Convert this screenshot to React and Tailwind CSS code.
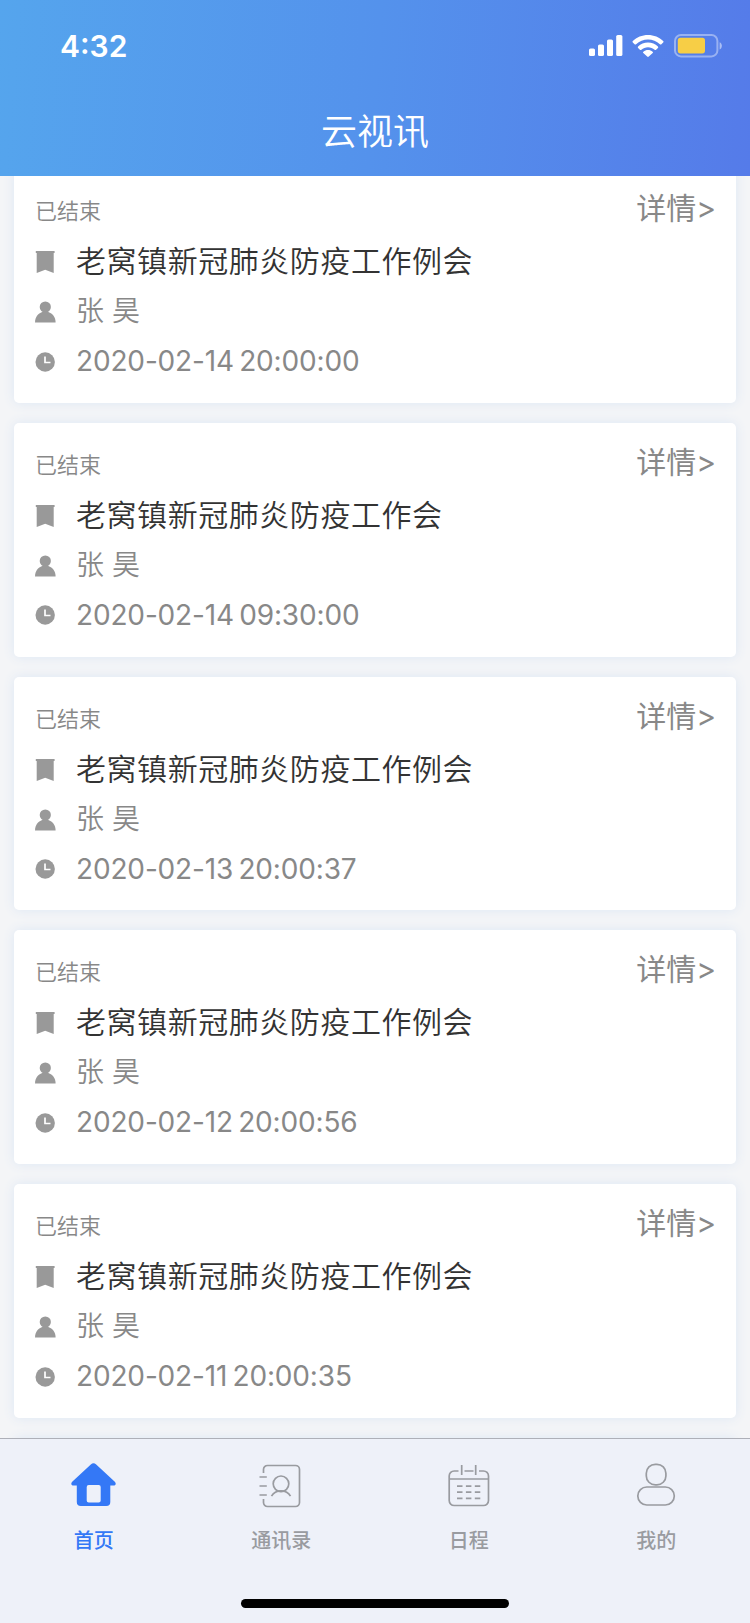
const meetings = [
  { id: 1, title: '老窝镇新冠肺炎防疫工作例会', host: '张 昊', time: '2020-02-14 20:00:00' },
  { id: 2, title: '老窝镇新冠肺炎防疫工作会', host: '张 昊', time: '2020-02-14 09:30:00' },
  { id: 3, title: '老窝镇新冠肺炎防疫工作例会', host: '张 昊', time: '2020-02-13 20:00:37' },
  { id: 4, title: '老窝镇新冠肺炎防疫工作例会', host: '张 昊', time: '2020-02-12 20:00:56' },
  { id: 5, title: '老窝镇新冠肺炎防疫工作例会', host: '张 昊', time: '2020-02-11 20:00:35' },
];

function SignalIcon() {
  return (
    <svg width="34" height="22" viewBox="0 0 34 22" fill="#fff">
      <rect x="0" y="13.5" width="6" height="7.5" rx="1.6" />
      <rect x="9" y="9.5" width="6" height="11.5" rx="1.6" />
      <rect x="18" y="4.5" width="6" height="16.5" rx="1.6" />
      <rect x="27.2" y="0" width="6.2" height="21" rx="1.6" />
    </svg>
  );
}

function WifiIcon() {
  return (
    <svg width="32" height="22" viewBox="0 0 32 22" fill="#fff">
      <path d="M16 0C10.100 0 4.700 2.200.8 6c-.5.5-.5 1 0 1.500l1.800 1.800c.4.4 1 .4 1.500 0C7.300 6.300 11.500 4.600 16 4.600s8.700 1.700 11.900 4.700c.5.4 1.100.4 1.500 0l1.800-1.800c.5-.5.5-1 0-1.500C27.300 2.200 21.900 0 16 0z" />
      <path d="M16 7.600c-3.800 0-7.300 1.400-9.900 3.800-.5.500-.5 1 0 1.500l1.800 1.800c.4.4 1 .4 1.500 0 1.800-1.600 4.100-2.500 6.600-2.500s4.800.9 6.600 2.500c.5.4 1.100.4 1.500 0l1.800-1.800c.5-.5.5-1 0-1.500C23.300 9 19.800 7.600 16 7.600z" />
      <path d="M16 15.100c-1.800 0-3.400.6-4.600 1.600-.5.400-.5.900-.1 1.400l3.900 3.500c.5.500 1.100.5 1.600 0l3.900-3.500c.4-.5.4-1-.1-1.400-1.200-1-2.800-1.600-4.600-1.600z" />
    </svg>
  );
}

function BatteryIcon() {
  return (
    <svg width="49" height="24" viewBox="0 0 49 24">
      <rect x="1" y="1" width="42.4" height="21.4" rx="6" fill="none" stroke="#fff" strokeOpacity="0.4" strokeWidth="2" />
      <rect x="3.8" y="3.8" width="27.2" height="15.6" rx="2.6" fill="#f7ce46" />
      <path d="M45.6 8.200c3 1 3 6.200 0 7.200z" fill="#fff" fillOpacity="0.5" />
    </svg>
  );
}

function BookmarkIcon() {
  return (
    <svg className="mt-0.5" width="22" height="22" viewBox="0 0 22 22" fill="#999">
      <path d="M.8 0h18.800v2h-.9v20L10.200 18.800 1.700 22V2H.8z" />
    </svg>
  );
}

function PersonIcon() {
  return (
    <svg className="mt-0.5" width="22" height="22" viewBox="0 0 22 22" fill="#999">
      <circle cx="10.300" cy="6" r="5.600" />
      <path d="M0 21.500C0 16 3 12.600 7.200 11h6.200C17.600 12.600 20.600 16 20.600 21.500z" />
    </svg>
  );
}

function ClockIcon() {
  return (
    <svg className="mt-px" width="22" height="22" viewBox="0 0 22 22">
      <circle cx="10.200" cy="11" r="9.700" fill="#999" />
      <path d="M10 5.500v6h5.500" fill="none" stroke="#fff" strokeWidth="1.700" />
    </svg>
  );
}

function HomeIcon() {
  return (
    <svg width="46" height="46" viewBox="0 0 46 46" fill="#3478f6">
      <path
        fillRule="evenodd"
        d="M19.800 2.400a4 4 0 0 1 5.400 0L43.800 19.800c1.700 1.700.9 3.700-1.300 3.700h-3.200v16.500a4 4 0 0 1-4 4H9.800a4 4 0 0 1-4-4V23.500H2.500c-2.200 0-3-2-1.300-3.700zM17.700 23a2 2 0 0 0-2 2v13.500a2 2 0 0 0 2 2h10a2 2 0 0 0 2-2V25a2 2 0 0 0-2-2z"
      />
    </svg>
  );
}

function ContactsIcon() {
  return (
    <svg width="46" height="46" viewBox="0 0 46 46" fill="none" stroke="#999ba0" strokeWidth="1.700">
      <path d="M5.500 11V7.500a4 4 0 0 1 4-4h28a4 4 0 0 1 4 4v33a4 4 0 0 1-4 4h-28a4 4 0 0 1-4-4V37" />
      <path d="M1.500 15h7.300M1.500 24h7.300M1.500 33h7.300" />
      <circle cx="23" cy="21.800" r="7.800" />
      <path d="M13.500 34.200c2-3.600 5.400-5.300 9.500-5.300s7.500 1.700 9.500 5.300" />
    </svg>
  );
}

function CalendarIcon() {
  return (
    <svg width="46" height="46" viewBox="0 0 46 46" fill="none" stroke="#999ba0" strokeWidth="1.700">
      <path d="M12.500 9H8.200a5 5 0 0 0-5 5v24.500a5 5 0 0 0 5 5h29.300a5 5 0 0 0 5-5V14a5 5 0 0 0-5-5h-4.500M18.500 9h9" />
      <path d="M15.700 3v10M29.700 3v10" />
      <path d="M3.200 17h39.300" />
      <path d="M11 24.200h23.500M11 30.200h23.500M11 36.300h23.500" strokeDasharray="5.500 3.400" />
    </svg>
  );
}

function ProfileIcon() {
  return (
    <svg width="46" height="46" viewBox="0 0 46 46" fill="none" stroke="#999ba0" strokeWidth="1.700">
      <rect x="13.300" y="2.300" width="19.600" height="20.600" rx="9" />
      <rect x="4.800" y="25" width="36.500" height="18" rx="9" />
    </svg>
  );
}

const tabs = [
  { label: '首页', Icon: HomeIcon, active: true },
  { label: '通讯录', Icon: ContactsIcon },
  { label: '日程', Icon: CalendarIcon },
  { label: '我的', Icon: ProfileIcon },
];

function MeetingCard({ meeting }) {
  return (
    <div className="h-[233.75px] shrink-0 rounded-[5px] bg-white pt-5 pr-5 pl-[21px] font-[350] shadow-[0_0_12px_#dde7f4]">
      <div className="flex h-11 items-center justify-between text-[#888]">
        <span className="text-[22px] leading-[44px]">已结束</span>
        <span className="pb-[5px] text-[30px] leading-[39px] font-normal">详情&gt;</span>
      </div>
      <div className="flex h-14 items-center">
        <BookmarkIcon />
        <span className="ml-[19px] text-[30px] leading-[56px] tracking-[0.55px] text-[#333]">{meeting.title}</span>
      </div>
      <div className="flex h-11 items-center text-[#888]">
        <PersonIcon />
        <span className="ml-[19px] text-[28px] leading-[44px]">{meeting.host}</span>
      </div>
      <div className="flex h-14 items-center text-[#888]">
        <ClockIcon />
        <span className="ml-[19px] text-[28px] leading-[56px] font-normal tracking-[-0.15px] [word-spacing:-2.5px]">{meeting.time}</span>
      </div>
    </div>
  );
}

function App() {
  return (
    <div className="flex h-[1623px] w-[750px] flex-col overflow-hidden bg-[#f4f5f7] font-['Inter','Noto_Sans_CJK_SC',sans-serif]">
      <header className="z-10 h-44 shrink-0 bg-[linear-gradient(95deg,#55a5ed_0%,#5492ec_50%,#557be9_100%)] text-white">
        <div className="flex h-[91px] items-center justify-between pr-[27px] pl-[60px]">
          <span className="text-[30px] leading-none font-semibold">4:32</span>
          <div className="flex items-center">
            <SignalIcon />
            <div className="ml-[9px]"><WifiIcon /></div>
            <div className="ml-[10px]"><BatteryIcon /></div>
          </div>
        </div>
        <h1 className="text-center text-[36px] leading-[82px] font-[350]">云视讯</h1>
      </header>

      <main className="flex h-[1262px] shrink-0 flex-col overflow-hidden px-[14px]">
        <div className="-mt-[7px] flex flex-col gap-5">
          {meetings.map((m) => (
            <MeetingCard key={m.id} meeting={m} />
          ))}
          <div className="h-5 shrink-0 rounded-t-[5px] bg-white shadow-[0_0_12px_#dde7f4]" />
        </div>
      </main>

      <nav className="z-10 flex flex-1 flex-col border-t border-[#aeb0b8] bg-[#eef1f9]">
        <div className="grid grid-cols-4 pt-[23px]">
          {tabs.map(({ label, Icon, active }) => (
            <div key={label} className={`flex flex-col items-center ${active ? 'text-[#3478f6]' : 'text-[#999ba0]'}`}>
              <Icon />
              <span className="mt-[18px] text-[20px] leading-[30px] font-medium">{label}</span>
            </div>
          ))}
        </div>
        <div className="mx-auto mt-[43px] h-[9px] w-[268px] rounded-full bg-black" />
      </nav>
    </div>
  );
}

export default App
